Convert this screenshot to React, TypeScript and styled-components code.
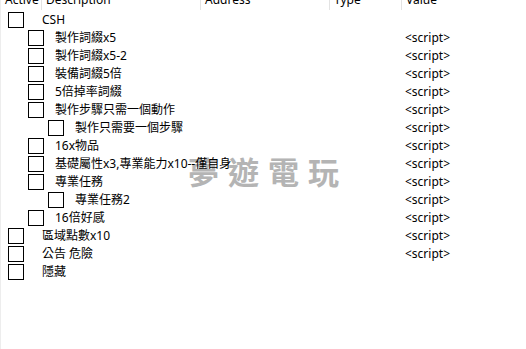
import React from "react";
import styled, { createGlobalStyle } from "styled-components";

const Global = createGlobalStyle`
  html, body { margin: 0; padding: 0; background: #fff; }
  body { font-family: "Noto Sans", "Noto Sans CJK TC", sans-serif; font-size: 12px; color: #000; }
`;

const Frame = styled.div`
  position: relative;
  width: 526px;
  height: 349px;
  overflow: hidden;
  border-left: 1px solid #ededed;
  box-sizing: border-box;
`;

const Header = styled.div`
  display: grid;
  grid-template-columns: 41px 159px 129px 72px 1fr;
  height: 11px;
  overflow: hidden;
`;

const HeadCell = styled.div<{ $sep?: boolean }>`
  padding-left: 4px;
  border-right: ${(p) => (p.$sep ? "1px solid #e3e3e3" : "none")};
  height: 10px;
  line-height: 12px;
  white-space: nowrap;
  overflow: hidden;
  & > span { display: block; margin-top: -6px; }
`;

const Row = styled.div`
  position: relative;
  z-index: 1;
  display: grid;
  grid-template-columns: 401px 1fr;
  height: 18px;
  align-items: center;
`;

const Tree = styled.div`
  display: flex;
  align-items: center;
  white-space: nowrap;
`;

const Check = styled.span<{ $level: number }>`
  display: inline-block;
  box-sizing: border-box;
  width: 16px;
  height: 16px;
  border: 1px solid #000;
  margin-left: ${(p) => 7 + p.$level * 20}px;
  flex: none;
`;

const Label = styled.span<{ $level: number }>`
  margin-left: ${(p) => (p.$level === 0 ? 18 : 11)}px;
  line-height: 18px;
`;

const Value = styled.span`
  padding-left: 3px;
  line-height: 18px;
  white-space: nowrap;
`;

const Watermark = styled.div`
  position: absolute;
  z-index: 0;
  left: 187px;
  top: 153px;
  font-family: "Noto Sans CJK TC", sans-serif;
  font-weight: 700;
  font-size: 31px;
  line-height: 36px;
  letter-spacing: 1px;
  color: #b4b4b4;
  white-space: pre;
  pointer-events: none;
`;

type Entry = { text: string; level: number; value?: string };

const entries: Entry[] = [
  { text: "CSH", level: 0 },
  { text: "製作詞綴x5", level: 1, value: "<script>" },
  { text: "製作詞綴x5-2", level: 1, value: "<script>" },
  { text: "裝備詞綴5倍", level: 1, value: "<script>" },
  { text: "5倍掉率詞綴", level: 1, value: "<script>" },
  { text: "製作步驟只需一個動作", level: 1, value: "<script>" },
  { text: "製作只需要一個步驟", level: 2, value: "<script>" },
  { text: "16x物品", level: 1, value: "<script>" },
  { text: "基礎屬性x3,專業能力x10--僅自身", level: 1, value: "<script>" },
  { text: "專業任務", level: 1, value: "<script>" },
  { text: "專業任務2", level: 2, value: "<script>" },
  { text: "16倍好感", level: 1, value: "<script>" },
  { text: "區域點數x10", level: 0, value: "<script>" },
  { text: "公告 危險", level: 0, value: "<script>" },
  { text: "隱藏", level: 0 },
];

export default function App() {
  return (
    <Frame>
      <Global />
      <Header>
        <HeadCell $sep><span>Active</span></HeadCell>
        <HeadCell $sep><span>Description</span></HeadCell>
        <HeadCell $sep><span>Address</span></HeadCell>
        <HeadCell $sep><span>Type</span></HeadCell>
        <HeadCell><span>Value</span></HeadCell>
      </Header>
      <Watermark>{"夢 遊 電 玩"}</Watermark>
      {entries.map((e, i) => (
        <Row key={i}>
          <Tree>
            <Check $level={e.level} />
            <Label $level={e.level}>{e.text}</Label>
          </Tree>
          <Value>{e.value ?? ""}</Value>
        </Row>
      ))}
    </Frame>
  );
}
